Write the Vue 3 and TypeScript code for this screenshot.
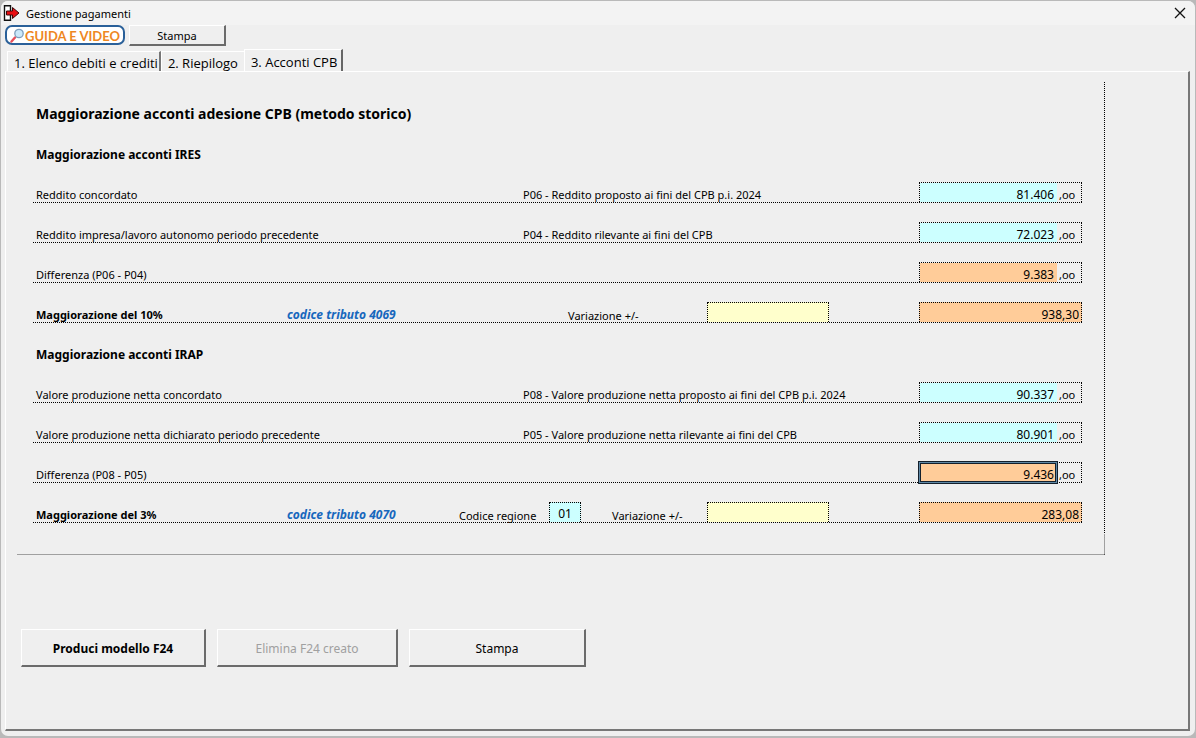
<script setup lang="ts">
import { ref } from 'vue'

interface Amount { id: string; label: string; note: string; value: string; tone: string; active?: boolean }
interface Section {
  title: string
  amounts: Amount[]
  rate: { id: string; label: string; code: string; value: string; region?: string; variation: string }
}

const tabs = ['1. Elenco debiti e crediti', '2. Riepilogo', '3. Acconti CPB']
const current = ref(2)

const sections = ref<Section[]>([
  {
    title: 'Maggiorazione acconti IRES',
    amounts: [
      { id: 'p06', label: 'Reddito concordato', note: 'P06 - Reddito proposto ai fini del CPB p.i. 2024', value: '81.406', tone: 'cyan' },
      { id: 'p04', label: 'Reddito impresa/lavoro autonomo periodo precedente', note: 'P04 - Reddito rilevante ai fini del CPB', value: '72.023', tone: 'cyan' },
      { id: 'diff-ires', label: 'Differenza (P06 - P04)', note: '', value: '9.383', tone: 'orange' },
    ],
    rate: { id: 'ires', label: 'Maggiorazione del 10%', code: 'codice tributo 4069', value: '938,30', variation: '' },
  },
  {
    title: 'Maggiorazione acconti IRAP',
    amounts: [
      { id: 'p08', label: 'Valore produzione netta concordato', note: 'P08 - Valore produzione netta proposto ai fini del CPB p.i. 2024', value: '90.337', tone: 'cyan' },
      { id: 'p05', label: 'Valore produzione netta dichiarato periodo precedente', note: 'P05 - Valore produzione netta rilevante ai fini del CPB', value: '80.901', tone: 'cyan' },
      { id: 'diff-irap', label: 'Differenza (P08 - P05)', note: '', value: '9.436', tone: 'orange', active: true },
    ],
    rate: { id: 'irap', label: 'Maggiorazione del 3%', code: 'codice tributo 4070', value: '283,08', region: '01', variation: '' },
  },
])
</script>

<template>
  <div class="desktop">
    <main class="window">
      <header class="titlebar">
        <svg class="app-icon" viewBox="0 0 17 16" aria-hidden="true">
          <path d="M1.500 .7h6v14.600h-6z" fill="#fff" stroke="#111" stroke-width="1.400" />
          <path d="M3.500 6h6V2.500L16 8l-6.500 5.500V10h-6z" fill="#e80d12" stroke="#3a0808" />
        </svg>
        <h1>Gestione pagamenti</h1>
        <button class="close" type="button" aria-label="Chiudi">
          <svg viewBox="0 0 12 12" aria-hidden="true"><path d="M1 1l10 10M11 1L1 11" stroke="#111" stroke-width="1.300" /></svg>
        </button>
      </header>

      <div class="toolbar">
        <button class="guide" type="button">
          <svg viewBox="0 0 15 15" aria-hidden="true">
            <path d="M1.500 13.500L5 9.500" stroke="#e8505b" stroke-width="2.400" stroke-linecap="round" />
            <circle cx="9" cy="5.500" r="4.200" fill="#cbe9fa" stroke="#7d9fbd" stroke-width="1.300" />
          </svg>
          <span>GUIDA E VIDEO</span>
        </button>
        <button class="btn small" type="button">Stampa</button>
      </div>

      <nav class="tabs" role="tablist">
        <button
          v-for="(tab, i) in tabs" :key="tab" type="button" role="tab" class="tab"
          :class="{ selected: current === i }" :aria-selected="current === i" @click="current = i"
        >{{ tab }}</button>
      </nav>

      <section class="panel">
        <form class="form" @submit.prevent>
          <h2>Maggiorazione acconti adesione CPB (metodo storico)</h2>
          <template v-for="s in sections" :key="s.title">
            <h3>{{ s.title }}</h3>
            <div v-for="a in s.amounts" :key="a.id" class="row">
              <label class="name" :for="a.id">{{ a.label }}</label>
              <span class="note">{{ a.note }}</span>
              <span class="amount">
                <input :id="a.id" v-model="a.value" type="text" :class="[a.tone, { active: a.active }]">
                <span class="cents">,oo</span>
              </span>
            </div>
            <div class="row rate">
              <label class="name" :for="s.rate.id">{{ s.rate.label }}</label>
              <div class="middle">
                <em class="code">{{ s.rate.code }}</em>
                <template v-if="s.rate.region">
                  <label class="region-label" :for="s.rate.id + '-reg'">Codice regione</label>
                  <input :id="s.rate.id + '-reg'" v-model="s.rate.region" class="region cyan" type="text">
                </template>
                <label class="var-label" :class="{ near: s.rate.region }" :for="s.rate.id + '-var'">Variazione +/-</label>
                <input :id="s.rate.id + '-var'" v-model="s.rate.variation" class="variation" type="text">
              </div>
              <input :id="s.rate.id" v-model="s.rate.value" class="total orange" type="text">
            </div>
          </template>
          <div class="tail"></div>
        </form>

        <div class="actions">
          <button class="btn produce" type="button">Produci modello F24</button>
          <button class="btn remove" type="button" disabled>Elimina F24 creato</button>
          <button class="btn print" type="button">Stampa</button>
        </div>
      </section>
    </main>
  </div>
</template>

<style>
body { background: #b9b9b9; }
</style>

<style scoped>
* { box-sizing: border-box; }
.desktop {
  min-height: 100vh;
  padding: 1px 1px 2px;
  display: flex;
  font: 12px/16px "Noto Sans", "Open Sans", sans-serif;
  color: #000;
}
button, input { font: inherit; color: inherit; margin: 0; }
.window {
  flex: 1;
  display: flex;
  flex-direction: column;
  padding: 0 5px 5px 4px;
  background: #efefef;
  border-radius: 7px;
  overflow: hidden;
}
.titlebar {
  display: flex;
  align-items: center;
  height: 24px;
  margin: 0 -5px 0 -4px;
  padding: 0 9px 0 2px;
  background: #f3f3f3;
}
.app-icon { width: 17px; height: 16px; }
h1 { flex: 1; margin: 0 0 0 6px; padding-top: 2px; font-size: 11px; font-weight: 400; }
.close { border: 0; background: none; padding: 0; width: 12px; height: 12px; display: flex; }
.close svg { width: 12px; height: 12px; }
.toolbar { display: flex; gap: 4px; }
.guide {
  display: flex;
  align-items: center;
  width: 120px;
  height: 20px;
  padding: 0 0 0 3px;
  border: 2px solid #2a6099;
  border-radius: 7px;
  background: #fff;
  color: #ee8722;
  font: 700 13px/16px Lato, sans-serif;
  white-space: nowrap;
}
.guide svg { flex: none; width: 15px; height: 15px; }
.guide span { padding-top: 1px; }
.btn {
  padding: 2px 0 0;
  background: #efefef;
  border: solid;
  border-width: 1px 2px 2px 1px;
  border-color: #fff #6b6b6b #6b6b6b #fff;
}
.small { width: 97px; height: 21px; font-size: 11px; }
.tabs { display: flex; align-items: flex-end; height: 25px; padding-left: 2px; }
.tab {
  height: 20px;
  padding: 2px 6px 0;
  border: 0;
  border-top: 1px solid #fff;
  border-left: 1px solid #fff;
  background: #efefef;
  font: 13px/16px "Open Sans", sans-serif;
  white-space: nowrap;
}
.tab:first-child { padding-right: 1px; border-right: 2px solid #777; }
.tab.selected { height: 22px; padding: 2px 4px 0 6px; border-right: 2px solid #666; }
.panel {
  flex: 1;
  border: 1px solid #fff;
  border-right: 2px solid #777;
  border-bottom: 2px solid #777;
  padding: 10px 83px 0 11px;
}
.form {
  padding: 22px 22px 0 16px;
  border-bottom: 1px solid #a0a0a0;
  border-right: 1px dotted #000;
}
h2, h3 { margin: 0; padding-left: 3px; font-weight: 700; line-height: 20px; }
h2 { height: 19px; font-size: 14px; }
h3 { height: 20px; margin-top: 20px; padding-top: 2px; font-size: 12px; }
.row {
  display: grid;
  grid-template-columns: 490fr 396fr 163px;
  grid-template-rows: 100%;
  height: 21px;
  margin-top: 19px;
  border-bottom: 1px dotted #000;
}
.row.rate { grid-template-columns: 254fr 632fr 163px; }
.name, .note, .code { padding-top: 5px; white-space: nowrap; }
.name, .note, .region-label, .var-label { font-size: 11px; }
.name { padding-left: 3px; }
.rate .name { font-weight: 700; }
.amount { display: flex; border: 1px dotted #000; border-bottom: 0; }
input {
  min-width: 0;
  border: 1px dotted #000;
  border-bottom: 0;
  border-radius: 0;
  padding: 5px 2px 0;
  line-height: 14px;
  text-align: right;
  outline: 0;
}
.amount input { width: 137px; padding-right: 3px; border: 0; }
.cents { padding: 4px 0 0 2px; font-size: 11px; }
.cyan { background: #cff; }
.orange { background: #fc9; }
.amount .active {
  width: 136px;
  margin-right: 1px;
  padding-right: 2px;
  outline: 3px double #14202c;
  outline-offset: -1px;
  box-shadow: 0 0 0 1px #5f88a5;
}
.middle { display: flex; padding-right: 90px; }
.code { flex: 1; color: #1767bd; font-weight: 700; }
.region-label, .var-label { padding-top: 6px; white-space: nowrap; }
.region-label { width: 90px; }
.region { width: 32px; margin-right: 31px; padding: 3px 0 0; text-align: center; }
.var-label { width: 139px; }
.var-label.near { width: 95px; }
.variation { width: 122px; background: #ffc; }
.tail { height: 20px; margin: 11px -23px 0 0; border-right: 1px solid #a0a0a0; }
.actions { display: flex; gap: 11px; padding: 74px 0 0 4px; }
.actions .btn { height: 38px; }
.produce { width: 185px; font-weight: 700; }
.remove { width: 181px; color: #a0a0a0; }
.print { width: 177px; }
</style>
